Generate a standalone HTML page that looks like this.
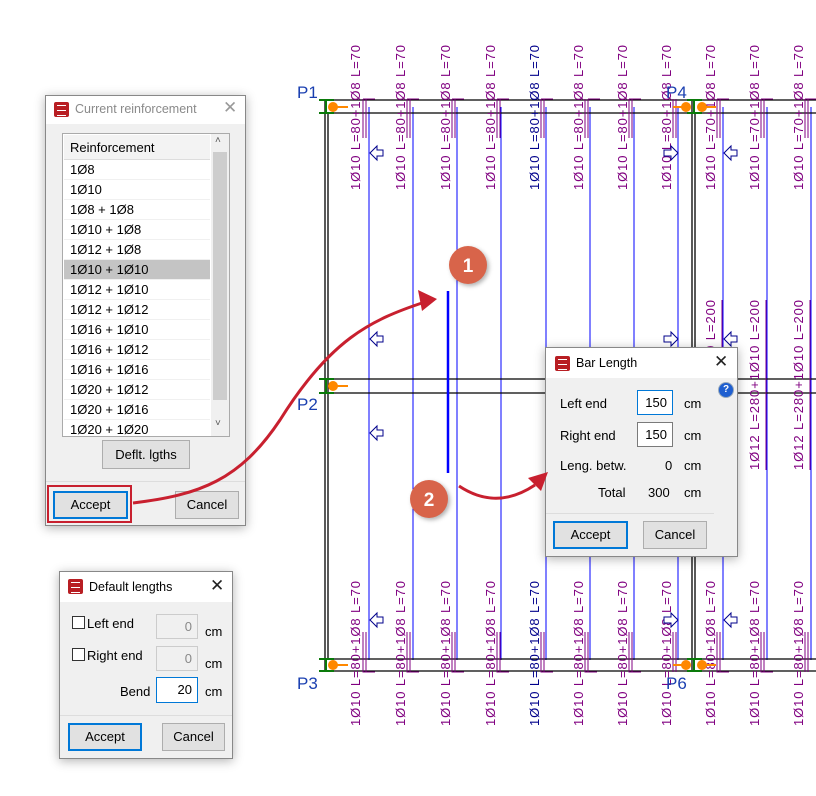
<!DOCTYPE html>
<html><head><meta charset="utf-8"><style>
body{margin:0;width:816px;height:796px;background:#fff;position:relative;overflow:hidden;font-family:"Liberation Sans",sans-serif;font-size:13px;color:#000}
.dlg{position:absolute;background:#f0f0f0;border:1px solid #888;box-shadow:0 2px 10px rgba(0,0,0,.3)}
.tb{position:absolute;left:0;right:0;top:0;background:#fff}
.ic{position:absolute;width:15px;height:15px;background:#b81e23;border-radius:2px}
.ic:after{content:"";position:absolute;left:3px;top:3px;width:9px;height:9px;border:1px solid #fff;border-width:1px 0;background:linear-gradient(#fff,#fff) 0 4px/9px 1px no-repeat}
.tt{position:absolute;font-size:12.5px}
.x{position:absolute;font-size:17px;color:#222}
.ab{position:absolute}
.btn{position:absolute;background:#e1e1e1;border:1px solid #adadad;text-align:center;box-sizing:border-box}
.btn.d{border:2px solid #0078d7}
.in{position:absolute;background:#fff;border:1px solid #7a7a7a;box-sizing:border-box;text-align:right;padding-right:5px}
.row{position:absolute;left:1px;width:146px;height:20px;line-height:20px;padding-left:6px;border-bottom:1px solid #f0f0f0;box-sizing:border-box}
</style></head><body>
<svg width="816" height="796" style="position:absolute;left:0;top:0" font-family="Liberation Sans, sans-serif">
<g stroke="#00f" stroke-width="1">
<line x1="369" y1="107" x2="369" y2="660"/><line x1="413" y1="107" x2="413" y2="660"/><line x1="457" y1="107" x2="457" y2="660"/><line x1="501" y1="107" x2="501" y2="660"/><line x1="546" y1="107" x2="546" y2="660"/><line x1="590" y1="107" x2="590" y2="660"/><line x1="634" y1="107" x2="634" y2="660"/><line x1="678" y1="107" x2="678" y2="660"/><line x1="723" y1="107" x2="723" y2="660"/><line x1="767" y1="107" x2="767" y2="660"/><line x1="811" y1="107" x2="811" y2="660"/>
</g>
<g stroke="#000" stroke-width="1.3">
<line x1="325" y1="100" x2="816" y2="100"/><line x1="325" y1="113" x2="816" y2="113"/>
<line x1="325" y1="379" x2="816" y2="379"/><line x1="325" y1="393" x2="816" y2="393"/>
<line x1="325" y1="659" x2="816" y2="659"/><line x1="325" y1="671" x2="816" y2="671"/>
<line x1="325" y1="100" x2="325" y2="671"/><line x1="328" y1="113" x2="328" y2="659"/>
<line x1="692" y1="100" x2="692" y2="671"/><line x1="695" y1="113" x2="695" y2="659"/>
</g>
<g stroke="#800080" stroke-width="1" fill="none">
<path d="M363 99V138M366 99V138M363 99H375M407 99V138M410 99V138M407 99H419M452 99V138M455 99V138M452 99H464M497 99V138M500 99V138M497 99H509M541 99V138M544 99V138M541 99H553M585 99V138M588 99H600M588 99V138M629 99V138M632 99V138M629 99H641M673 99V138M676 99V138M717 99V138M720 99V138M717 99H729M761 99V138M764 99V138M761 99H773M805 99V138M808 99V138M805 99H816"/>
<path d="M363 632V672H375M366 632V672M407 632V672H419M410 632V672M452 632V672H464M455 632V672M497 632V672H509M500 632V672M541 632V672H553M544 632V672M585 632V672H597M588 632V672M629 632V672H641M632 632V672M673 632V672M676 632V672M717 632V672H729M720 632V672M761 632V672H773M764 632V672M805 632V672M808 632V672"/>
<path d="M722 300V470M766 300V470M810 300V470"/>
</g>
<g fill="#800080" font-size="13">
<text transform="translate(360,190) rotate(-90)" textLength="145">1Ø10 L=80+1Ø8 L=70</text>
<text transform="translate(405,190) rotate(-90)" textLength="145">1Ø10 L=80+1Ø8 L=70</text>
<text transform="translate(450,190) rotate(-90)" textLength="145">1Ø10 L=80+1Ø8 L=70</text>
<text transform="translate(495,190) rotate(-90)" textLength="145">1Ø10 L=80+1Ø8 L=70</text>
<text transform="translate(539,190) rotate(-90)" textLength="145" fill="#00008b">1Ø10 L=80+1Ø8 L=70</text>
<text transform="translate(583,190) rotate(-90)" textLength="145">1Ø10 L=80+1Ø8 L=70</text>
<text transform="translate(627,190) rotate(-90)" textLength="145">1Ø10 L=80+1Ø8 L=70</text>
<text transform="translate(671,190) rotate(-90)" textLength="145">1Ø10 L=80+1Ø8 L=70</text>
<text transform="translate(715,190) rotate(-90)" textLength="145">1Ø10 L=70+1Ø8 L=70</text>
<text transform="translate(759,190) rotate(-90)" textLength="145">1Ø10 L=70+1Ø8 L=70</text>
<text transform="translate(803,190) rotate(-90)" textLength="145">1Ø10 L=70+1Ø8 L=70</text>
<text transform="translate(360,726) rotate(-90)" textLength="145">1Ø10 L=80+1Ø8 L=70</text>
<text transform="translate(405,726) rotate(-90)" textLength="145">1Ø10 L=80+1Ø8 L=70</text>
<text transform="translate(450,726) rotate(-90)" textLength="145">1Ø10 L=80+1Ø8 L=70</text>
<text transform="translate(495,726) rotate(-90)" textLength="145">1Ø10 L=80+1Ø8 L=70</text>
<text transform="translate(539,726) rotate(-90)" textLength="145" fill="#00008b">1Ø10 L=80+1Ø8 L=70</text>
<text transform="translate(583,726) rotate(-90)" textLength="145">1Ø10 L=80+1Ø8 L=70</text>
<text transform="translate(627,726) rotate(-90)" textLength="145">1Ø10 L=80+1Ø8 L=70</text>
<text transform="translate(671,726) rotate(-90)" textLength="145">1Ø10 L=80+1Ø8 L=70</text>
<text transform="translate(715,726) rotate(-90)" textLength="145">1Ø10 L=80+1Ø8 L=70</text>
<text transform="translate(759,726) rotate(-90)" textLength="145">1Ø10 L=80+1Ø8 L=70</text>
<text transform="translate(803,726) rotate(-90)" textLength="145">1Ø10 L=80+1Ø8 L=70</text>
<text transform="translate(715,470) rotate(-90)" textLength="170">1Ø12 L=280+1Ø10 L=200</text>
<text transform="translate(759,470) rotate(-90)" textLength="170">1Ø12 L=280+1Ø10 L=200</text>
<text transform="translate(803,470) rotate(-90)" textLength="170">1Ø12 L=280+1Ø10 L=200</text>
</g>
<g stroke="#00008b" fill="#fff" stroke-width="1">
<path d="M370 153L377 146V150H383V156H377V160Z"/><path d="M370 339L377 332V336H383V342H377V346Z"/><path d="M370 433L377 426V430H383V436H377V440Z"/><path d="M370 620L377 613V617H383V623H377V627Z"/>
<path d="M724 153L731 146V150H737V156H731V160Z"/><path d="M724 339L731 332V336H737V342H731V346Z"/><path d="M724 620L731 613V617H737V623H731V627Z"/>
<path d="M678 153L671 146V150H664V156H671V160Z"/><path d="M678 339L671 332V336H664V342H671V346Z"/><path d="M678 620L671 613V617H664V623H671V627Z"/>
</g>
<g stroke="#0a7a0a" stroke-width="2" fill="none">
<path d="M319 100H334M319 113H334M326 100V113"/><path d="M319 379H334M319 393H334M326 379V393"/><path d="M319 659H334M319 671H334M326 659V671"/>
<path d="M687 100H702M687 113H702M694 100V113"/><path d="M687 659H702M687 671H702M694 659V671"/>
</g>
<g fill="#f80" stroke="#f80" stroke-width="2">
<circle cx="333" cy="107" r="4"/><line x1="333" y1="107" x2="348" y2="107"/>
<circle cx="333" cy="386" r="4"/><line x1="333" y1="386" x2="348" y2="386"/>
<circle cx="333" cy="665" r="4"/><line x1="333" y1="665" x2="348" y2="665"/>
<circle cx="686" cy="107" r="4"/><line x1="673" y1="107" x2="686" y2="107"/><circle cx="702" cy="107" r="4"/><line x1="702" y1="107" x2="716" y2="107"/>
<circle cx="686" cy="665" r="4"/><line x1="673" y1="665" x2="686" y2="665"/><circle cx="702" cy="665" r="4"/><line x1="702" y1="665" x2="716" y2="665"/>
</g>
<g fill="#1a3fb0" font-size="17">
<text x="297" y="98">P1</text><text x="666" y="98">P4</text><text x="297" y="410">P2</text><text x="297" y="689">P3</text><text x="666" y="689">P6</text>
</g>
<line x1="448" y1="291" x2="448" y2="473" stroke="#00f" stroke-width="2.5"/>
<circle cx="468" cy="265" r="19" fill="#d8644a" style="filter:drop-shadow(2px 2px 2px rgba(0,0,0,.3))"/>
<text x="468" y="272" fill="#fff" font-size="19" font-weight="bold" text-anchor="middle">1</text>
<circle cx="429" cy="499" r="19" fill="#d8644a" style="filter:drop-shadow(2px 2px 2px rgba(0,0,0,.3))"/>
<text x="429" y="506" fill="#fff" font-size="19" font-weight="bold" text-anchor="middle">2</text>
</svg>

<!-- Current reinforcement -->
<div class="dlg" style="left:45px;top:95px;width:199px;height:429px">
<div class="tb" style="height:28px"></div>
<div class="ic" style="left:8px;top:6px"></div>
<div class="tt" style="left:29px;top:6px;color:#8a8a8a">Current reinforcement</div>
<div class="x" style="left:177px;top:2px;color:#999">✕</div>
<div class="ab" style="left:16px;top:37px;width:166px;height:302px;background:#fff;border:1px solid #aaa;overflow:hidden">
<div class="row" style="top:1px;height:25px;line-height:25px;background:#f3f3f3;border-bottom:1px solid #ddd">Reinforcement</div>
<div class="row" style="top:26px">1Ø8</div>
<div class="row" style="top:46px">1Ø10</div>
<div class="row" style="top:66px">1Ø8 + 1Ø8</div>
<div class="row" style="top:86px">1Ø10 + 1Ø8</div>
<div class="row" style="top:106px">1Ø12 + 1Ø8</div>
<div class="row" style="top:126px;background:#c4c4c4">1Ø10 + 1Ø10</div>
<div class="row" style="top:146px">1Ø12 + 1Ø10</div>
<div class="row" style="top:166px">1Ø12 + 1Ø12</div>
<div class="row" style="top:186px">1Ø16 + 1Ø10</div>
<div class="row" style="top:206px">1Ø16 + 1Ø12</div>
<div class="row" style="top:226px">1Ø16 + 1Ø16</div>
<div class="row" style="top:246px">1Ø20 + 1Ø12</div>
<div class="row" style="top:266px">1Ø20 + 1Ø16</div>
<div class="row" style="top:286px">1Ø20 + 1Ø20</div>
<div class="ab" style="left:148px;top:0;width:18px;height:302px;background:#f0f0f0"></div>
<div class="ab" style="left:150px;top:18px;width:14px;height:248px;background:#cdcdcd"></div>
<div class="ab" style="left:152px;top:1px;font-size:10px;color:#555">˄</div>
<div class="ab" style="left:152px;top:284px;font-size:10px;color:#555">˅</div>
</div>
<div class="btn" style="left:56px;top:344px;width:88px;height:29px;line-height:27px">Deflt. lgths</div>
<div class="ab" style="left:0;top:385px;width:199px;height:1px;background:#ddd"></div>
<div class="ab" style="left:1px;top:389px;width:85px;height:38px;border:2px solid #c8202f;box-sizing:border-box"></div>
<div class="btn d" style="left:7px;top:395px;width:75px;height:28px;line-height:24px">Accept</div>
<div class="btn" style="left:129px;top:395px;width:64px;height:28px;line-height:26px">Cancel</div>
</div>

<!-- Bar Length -->
<div class="dlg" style="left:545px;top:347px;width:191px;height:208px">
<div class="tb" style="height:30px"></div>
<div class="ic" style="left:9px;top:8px"></div>
<div class="tt" style="left:30px;top:8px">Bar Length</div>
<div class="x" style="left:168px;top:4px">✕</div>
<div class="ab" style="left:172px;top:34px;width:14px;height:14px;border-radius:50%;background:#1f5fd0;color:#fff;font-size:10px;font-weight:bold;text-align:center;line-height:14px;border:1px solid #9ab">?</div>
<div class="ab" style="left:14px;top:48px">Left end</div>
<div class="in" style="left:91px;top:42px;width:36px;height:25px;line-height:23px;border-color:#0078d7">150</div>
<div class="ab" style="left:138px;top:48px">cm</div>
<div class="ab" style="left:14px;top:80px">Right end</div>
<div class="in" style="left:91px;top:74px;width:36px;height:25px;line-height:23px">150</div>
<div class="ab" style="left:138px;top:80px">cm</div>
<div class="ab" style="left:14px;top:110px">Leng. betw.</div>
<div class="ab" style="left:119px;top:110px">0</div>
<div class="ab" style="left:138px;top:110px">cm</div>
<div class="ab" style="left:52px;top:137px">Total</div>
<div class="ab" style="left:102px;top:137px">300</div>
<div class="ab" style="left:138px;top:137px">cm</div>
<div class="ab" style="left:0;top:165px;width:168px;height:1px;background:#ddd"></div>
<div class="btn d" style="left:7px;top:173px;width:75px;height:28px;line-height:24px">Accept</div>
<div class="btn" style="left:97px;top:173px;width:64px;height:28px;line-height:26px">Cancel</div>
</div>

<!-- Default lengths -->
<div class="dlg" style="left:59px;top:571px;width:172px;height:186px">
<div class="tb" style="height:30px"></div>
<div class="ic" style="left:8px;top:7px"></div>
<div class="tt" style="left:29px;top:8px">Default lengths</div>
<div class="x" style="left:150px;top:4px">✕</div>
<div class="ab" style="left:12px;top:44px;width:11px;height:11px;border:1px solid #333;background:#fff"></div>
<div class="ab" style="left:27px;top:44px">Left end</div>
<div class="in" style="left:96px;top:42px;width:42px;height:25px;line-height:23px;background:#f0f0f0;border-color:#ccc;color:#888">0</div>
<div class="ab" style="left:145px;top:52px">cm</div>
<div class="ab" style="left:12px;top:76px;width:11px;height:11px;border:1px solid #333;background:#fff"></div>
<div class="ab" style="left:27px;top:76px">Right end</div>
<div class="in" style="left:96px;top:74px;width:42px;height:25px;line-height:23px;background:#f0f0f0;border-color:#ccc;color:#888">0</div>
<div class="ab" style="left:145px;top:84px">cm</div>
<div class="ab" style="left:60px;top:112px">Bend</div>
<div class="in" style="left:96px;top:105px;width:42px;height:26px;line-height:24px;border-color:#0078d7">20</div>
<div class="ab" style="left:145px;top:112px">cm</div>
<div class="ab" style="left:0;top:143px;width:172px;height:1px;background:#ddd"></div>
<div class="btn d" style="left:8px;top:151px;width:74px;height:28px;line-height:24px">Accept</div>
<div class="btn" style="left:102px;top:151px;width:63px;height:28px;line-height:26px">Cancel</div>
</div>

<svg width="816" height="796" style="position:absolute;left:0;top:0;pointer-events:none">
<g stroke="#c8202f" stroke-width="3" fill="none">
<path d="M133 503C200 495 240 480 280 420C330 340 370 320 425 302"/>
<path d="M459 486C480 500 505 505 535 485"/>
</g>
<g fill="#c8202f"><path d="M437 299L418 290L422 311Z"/><path d="M548 472L528 478L541 491Z"/></g>
</svg>
</body></html>
